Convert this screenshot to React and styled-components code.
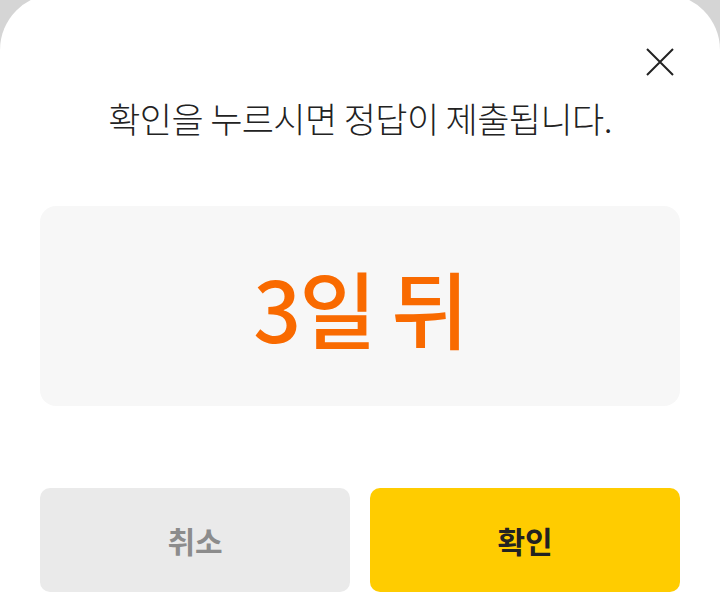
import React from "react";
import styled, { createGlobalStyle } from "styled-components";

const GlobalStyle = createGlobalStyle`
  html, body {
    margin: 0;
    padding: 0;
    background: #d5d5d5;
    overflow: hidden;
  }
  body {
    font-family: "Noto Sans CJK KR", "Noto Sans", sans-serif;
  }
`;

const Backdrop = styled.div`
  width: 720px;
  height: 612px;
  background: #d5d5d5;
  overflow: hidden;
`;

const Sheet = styled.div`
  margin-top: -6px;
  height: 700px;
  background: #ffffff;
  border-radius: 56px 56px 0 0;
  padding: 54px 40px 0;
  box-sizing: border-box;
  display: flex;
  flex-direction: column;
`;

const CloseRow = styled.div`
  display: flex;
  justify-content: flex-end;
  height: 28px;
`;

const CloseButton = styled.button`
  width: 32px;
  height: 28px;
  margin-right: 4px;
  padding: 0;
  border: none;
  background: none;
  display: flex;
  align-items: center;
  justify-content: center;
  cursor: pointer;
`;

const Title = styled.h2`
  margin: 20px 0 0;
  font-size: 35px;
  line-height: 44px;
  font-weight: 300;
  letter-spacing: -0.6px;
  color: #222222;
  text-align: center;
`;

const CountBox = styled.div`
  margin-top: 66px;
  height: 200px;
  border-radius: 16px;
  background: #f7f7f7;
  display: flex;
  align-items: center;
  justify-content: center;
`;

const CountText = styled.span`
  font-size: 84px;
  font-weight: 500;
  color: #f96a00;
  letter-spacing: -2px;
`;

const ButtonRow = styled.div`
  margin-top: 82px;
  display: grid;
  grid-template-columns: 1fr 1fr;
  gap: 20px;
`;

const ActionButton = styled.button`
  height: 104px;
  border: none;
  border-radius: 10px;
  font-family: "Noto Sans CJK KR", "Noto Sans", sans-serif;
  font-size: 30px;
  font-weight: 700;
  background: ${(p) => (p.primary ? "#ffcc00" : "#eaeaea")};
  color: ${(p) => (p.primary ? "#222222" : "#8c8c8c")};
  cursor: pointer;
`;

function CloseIcon() {
  return (
    <svg width="28" height="28" viewBox="0 0 28 28">
      <path d="M1 1 L27 27 M27 1 L1 27" stroke="#222222" strokeWidth="2" fill="none" />
    </svg>
  );
}

export default function App() {
  return (
    <Backdrop>
      <GlobalStyle />
      <Sheet>
        <CloseRow>
          <CloseButton aria-label="닫기">
            <CloseIcon />
          </CloseButton>
        </CloseRow>
        <Title>확인을 누르시면 정답이 제출됩니다.</Title>
        <CountBox>
          <CountText>3일 뒤</CountText>
        </CountBox>
        <ButtonRow>
          <ActionButton>취소</ActionButton>
          <ActionButton primary>확인</ActionButton>
        </ButtonRow>
      </Sheet>
    </Backdrop>
  );
}
